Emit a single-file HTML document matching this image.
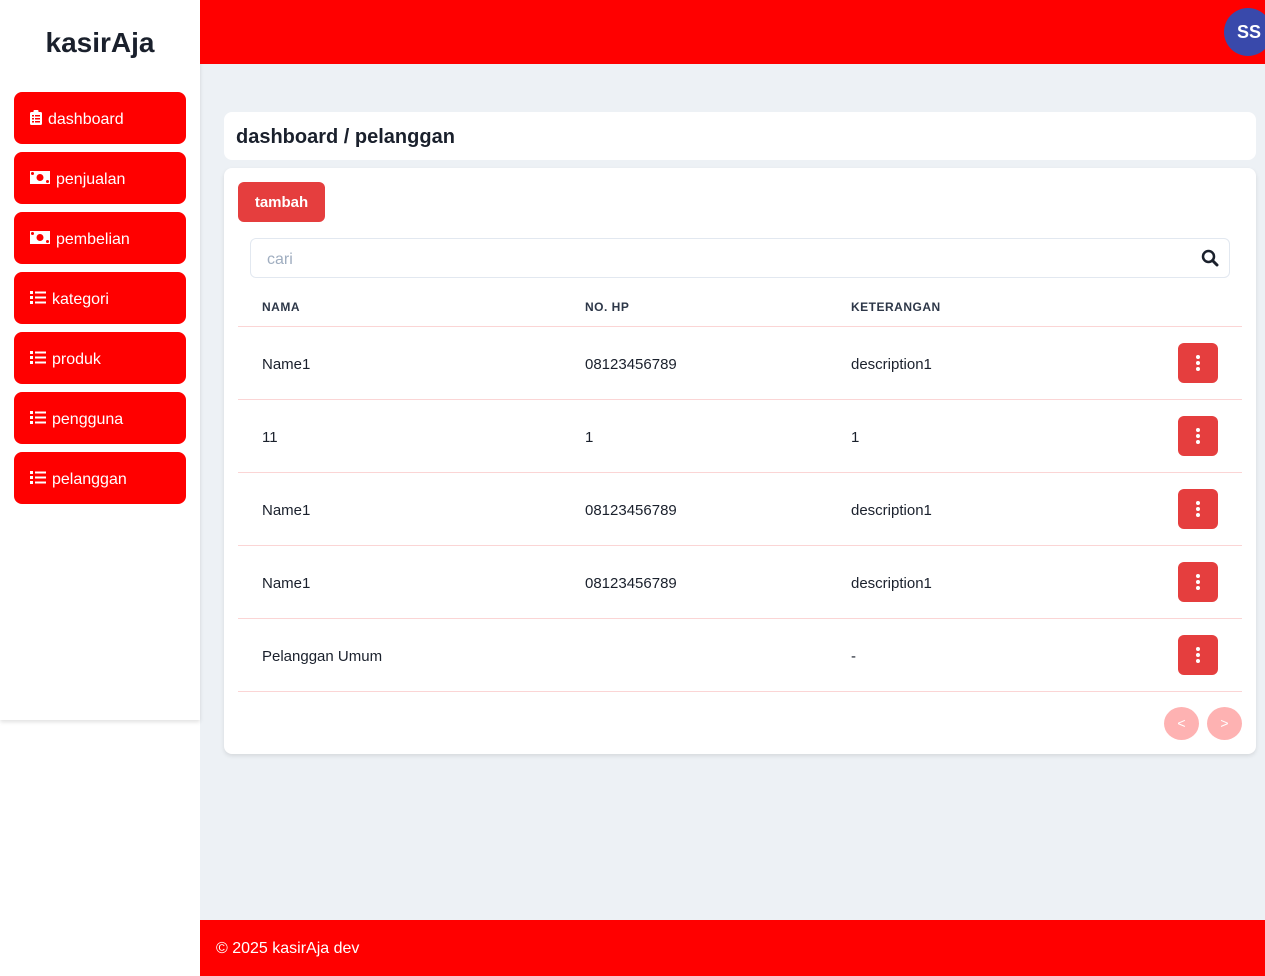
<!DOCTYPE html>
<html><head><meta charset="utf-8"><style>
*{box-sizing:border-box;margin:0;padding:0}
body{width:1265px;height:976px;background:#edf1f5;font-family:"Liberation Sans",sans-serif;position:relative;overflow:hidden;color:#1a202c}
.abs{position:absolute}
.leftbg{left:0;top:0;width:200px;height:976px;background:#fff}
.side{left:0;top:0;width:200px;height:720px;background:#fff;box-shadow:0 2px 4px rgba(0,0,0,.12)}
.logo{left:0;top:27px;width:200px;text-align:center;font-size:28px;font-weight:bold;color:#1a202c}
.nav{left:14px;width:172px;height:52px;background:#ff0000;border-radius:8px;color:#fff;font-size:16px;display:flex;align-items:center;padding-left:16px;padding-top:3px}
.nav svg{margin-right:6px;margin-top:-4px}
.hdr{left:200px;top:0;width:1065px;height:64px;background:#ff0000}
.av{left:1224px;top:8px;width:48px;height:48px;border-radius:50%;background:#3949ab;color:#fff;font-weight:bold;font-size:18px;line-height:48px;padding-left:13px}
.card{background:#fff;border-radius:8px}
.th{top:300px;font-size:12px;font-weight:bold;color:#2d3748;letter-spacing:.5px}
.line{left:238px;width:1004px;height:1px;background:#fbd5d5}
.td{font-size:15px;color:#1a202c}
.act{left:1178px;width:40px;height:40px;background:#e53e3e;border-radius:6px}
.act i{position:absolute;left:18px;width:4px;height:4px;background:#fff;border-radius:50%}
.pg{top:707px;width:35px;height:33px;border-radius:50%;background:#feb2b2;color:#fff;font-size:14px;text-align:center;line-height:33px}
.foot{left:200px;top:920px;width:1065px;height:56px;background:#ff0000;color:#fff;font-size:16px;padding:20px 0 0 16px}
</style></head><body>
<div class="abs leftbg"></div>
<div class="abs side"></div>
<div class="abs logo">kasirAja</div>
<div class="abs nav" style="top:92px"><svg width="12" height="15" viewBox="0 0 12 15"><rect x="0" y="2" width="12" height="13" rx="1.5" fill="#fff"/><rect x="3.5" y="0" width="5" height="3" rx="1" fill="#fff"/><g fill="#f00"><rect x="2" y="5" width="2" height="1.5"/><rect x="5" y="5" width="5" height="1.5"/><rect x="2" y="8" width="2" height="1.5"/><rect x="5" y="8" width="5" height="1.5"/><rect x="2" y="11" width="2" height="1.5"/><rect x="5" y="11" width="5" height="1.5"/></g></svg>dashboard</div>
<div class="abs nav" style="top:152px"><svg width="20" height="13" viewBox="0 0 20 13"><rect width="20" height="13" fill="#fff"/><circle cx="10" cy="6.5" r="3.5" fill="#f00"/><circle cx="2.5" cy="2.5" r="1.5" fill="#f00"/><circle cx="17.5" cy="10.5" r="1.5" fill="#f00"/></svg>penjualan</div>
<div class="abs nav" style="top:212px"><svg width="20" height="13" viewBox="0 0 20 13"><rect width="20" height="13" fill="#fff"/><circle cx="10" cy="6.5" r="3.5" fill="#f00"/><circle cx="2.5" cy="2.5" r="1.5" fill="#f00"/><circle cx="17.5" cy="10.5" r="1.5" fill="#f00"/></svg>pembelian</div>
<div class="abs nav" style="top:272px"><svg width="16" height="13" viewBox="0 0 16 13"><g fill="#fff"><rect x="0" y="0" width="3" height="3"/><rect x="5" y="0.5" width="11" height="2"/><rect x="0" y="5" width="3" height="3"/><rect x="5" y="5.5" width="11" height="2"/><rect x="0" y="10" width="3" height="3"/><rect x="5" y="10.5" width="11" height="2"/></g></svg>kategori</div>
<div class="abs nav" style="top:332px"><svg width="16" height="13" viewBox="0 0 16 13"><g fill="#fff"><rect x="0" y="0" width="3" height="3"/><rect x="5" y="0.5" width="11" height="2"/><rect x="0" y="5" width="3" height="3"/><rect x="5" y="5.5" width="11" height="2"/><rect x="0" y="10" width="3" height="3"/><rect x="5" y="10.5" width="11" height="2"/></g></svg>produk</div>
<div class="abs nav" style="top:392px"><svg width="16" height="13" viewBox="0 0 16 13"><g fill="#fff"><rect x="0" y="0" width="3" height="3"/><rect x="5" y="0.5" width="11" height="2"/><rect x="0" y="5" width="3" height="3"/><rect x="5" y="5.5" width="11" height="2"/><rect x="0" y="10" width="3" height="3"/><rect x="5" y="10.5" width="11" height="2"/></g></svg>pengguna</div>
<div class="abs nav" style="top:452px"><svg width="16" height="13" viewBox="0 0 16 13"><g fill="#fff"><rect x="0" y="0" width="3" height="3"/><rect x="5" y="0.5" width="11" height="2"/><rect x="0" y="5" width="3" height="3"/><rect x="5" y="5.5" width="11" height="2"/><rect x="0" y="10" width="3" height="3"/><rect x="5" y="10.5" width="11" height="2"/></g></svg>pelanggan</div>

<div class="abs hdr"></div>
<div class="abs av">SS</div>

<div class="abs card" style="left:224px;top:112px;width:1032px;height:48px;padding:14px 12px;font-size:20px;font-weight:bold">dashboard / pelanggan</div>
<div class="abs card" style="left:224px;top:168px;width:1032px;height:586px;box-shadow:0 2px 4px rgba(0,0,0,.1)"></div>
<div class="abs" style="left:238px;top:182px;width:87px;height:40px;background:#e53e3e;border-radius:6px;color:#fff;font-weight:bold;font-size:15px;text-align:center;line-height:42px">tambah</div>
<div class="abs" style="left:250px;top:238px;width:980px;height:40px;border:1px solid #e2e8f0;border-radius:6px;padding:12px 16px;font-size:16px;color:#a0aec0">cari</div>
<svg class="abs" style="left:1201px;top:249px" width="18" height="18" viewBox="0 0 18 18"><circle cx="7.5" cy="7.5" r="5.5" fill="none" stroke="#1a202c" stroke-width="2.5"/><line x1="11.5" y1="11.5" x2="16" y2="16" stroke="#1a202c" stroke-width="3" stroke-linecap="round"/></svg>

<div class="abs th" style="left:262px">NAMA</div>
<div class="abs th" style="left:585px">NO. HP</div>
<div class="abs th" style="left:851px">KETERANGAN</div>
<div class="abs line" style="top:326px"></div>

<div class="abs td" style="left:262px;top:356px">Name1</div><div class="abs td" style="left:585px;top:356px">08123456789</div><div class="abs td" style="left:851px;top:356px">description1</div>
<div class="abs act" style="top:343px"><i style="top:12px"></i><i style="top:18px"></i><i style="top:24px"></i></div>
<div class="abs line" style="top:399px"></div>
<div class="abs td" style="left:262px;top:429px">11</div><div class="abs td" style="left:585px;top:429px">1</div><div class="abs td" style="left:851px;top:429px">1</div>
<div class="abs act" style="top:416px"><i style="top:12px"></i><i style="top:18px"></i><i style="top:24px"></i></div>
<div class="abs line" style="top:472px"></div>
<div class="abs td" style="left:262px;top:502px">Name1</div><div class="abs td" style="left:585px;top:502px">08123456789</div><div class="abs td" style="left:851px;top:502px">description1</div>
<div class="abs act" style="top:489px"><i style="top:12px"></i><i style="top:18px"></i><i style="top:24px"></i></div>
<div class="abs line" style="top:545px"></div>
<div class="abs td" style="left:262px;top:575px">Name1</div><div class="abs td" style="left:585px;top:575px">08123456789</div><div class="abs td" style="left:851px;top:575px">description1</div>
<div class="abs act" style="top:562px"><i style="top:12px"></i><i style="top:18px"></i><i style="top:24px"></i></div>
<div class="abs line" style="top:618px"></div>
<div class="abs td" style="left:262px;top:648px">Pelanggan Umum</div><div class="abs td" style="left:851px;top:648px">-</div>
<div class="abs act" style="top:635px"><i style="top:12px"></i><i style="top:18px"></i><i style="top:24px"></i></div>
<div class="abs line" style="top:691px"></div>

<div class="abs pg" style="left:1164px">&lt;</div>
<div class="abs pg" style="left:1207px">&gt;</div>

<div class="abs foot">© 2025 kasirAja dev</div>
</body></html>
